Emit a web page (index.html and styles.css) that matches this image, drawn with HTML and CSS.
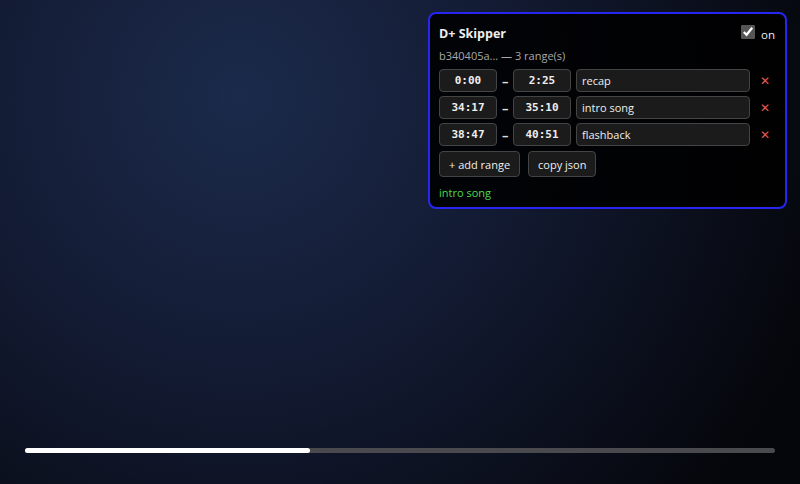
FILE: index.html
```html
<!DOCTYPE html>
<html lang="en">
  <head>
    <meta charset="UTF-8" />
    <meta name="viewport" content="width=device-width, initial-scale=1.0" />
    <title>D+ Skipper</title>
    <link rel="stylesheet" href="styles.css">
  </head>
  <body>
    <div class="player">
      <div class="skipper">
        <div class="skipper-head">
          <span class="skipper-title">D+ Skipper</span>
          <label class="toggle">
            <input type="checkbox" checked />
            <span>on</span>
          </label>
        </div>
        <div class="skipper-meta">b340405a... — 3 range(s)</div>
        <div class="range-list">
          <div class="range-row">
            <input class="time" type="text" value="0:00" />
            <span class="dash">–</span>
            <input class="time" type="text" value="2:25" />
            <input class="label" type="text" value="recap" />
            <button class="remove" type="button">✕</button>
          </div>
          <div class="range-row">
            <input class="time" type="text" value="34:17" />
            <span class="dash">–</span>
            <input class="time" type="text" value="35:10" />
            <input class="label" type="text" value="intro song" />
            <button class="remove" type="button">✕</button>
          </div>
          <div class="range-row">
            <input class="time" type="text" value="38:47" />
            <span class="dash">–</span>
            <input class="time" type="text" value="40:51" />
            <input class="label" type="text" value="flashback" />
            <button class="remove" type="button">✕</button>
          </div>
        </div>
        <div class="actions">
          <button class="action" type="button">+ add range</button>
          <button class="action" type="button">copy json</button>
        </div>
        <div class="status">intro song</div>
      </div>
      <div class="progress">
        <div class="progress-fill" style="width: 38%"></div>
      </div>
    </div>
  </body>
</html>
```

FILE: styles.css
```css
html,
body {
  margin: 0;
  height: 100%;
}
body {
  font-family: "Open Sans", "Noto Sans", sans-serif;
  background: radial-gradient(circle at 30% 20%, #1b2a4b 0%, #131b33 40%, #05060b 90%);
  color: #eee;
}
.player {
  position: relative;
  height: 100%;
  overflow: hidden;
}
.skipper {
  position: absolute;
  top: 12px;
  right: 13px;
  box-sizing: border-box;
  width: 359px;
  padding: 8px 10px 5px 9px;
  background: rgba(0, 0, 0, 0.88);
  border: 2px solid #2626f0;
  border-radius: 8px;
  font-size: 11px;
}
.skipper-head {
  display: flex;
  justify-content: space-between;
  align-items: center;
  height: 22px;
}
.skipper-title {
  font-weight: 700;
  font-size: 12.5px;
}
.toggle {
  display: flex;
  align-items: center;
  gap: 6px;
  font-size: 11.5px;
}
.toggle input {
  margin: 0 0 3px;
  width: 14px;
  height: 14px;
  accent-color: #555;
}
.toggle span {
  margin-top: 3px;
}
.skipper-meta {
  color: #a8a8a8;
  margin-top: 3px;
  margin-bottom: 4px;
  line-height: 18px;
}
.range-list {
  display: flex;
  flex-direction: column;
  gap: 4px;
}
.range-row {
  display: flex;
  align-items: center;
  gap: 5px;
}
.range-row input {
  box-sizing: border-box;
  height: 23px;
  margin: 0;
  background: #1b1b1b;
  border: 1px solid #444;
  border-radius: 4px;
  color: #eee;
  font-size: 11px;
}
.time {
  width: 58px;
  text-align: center;
  font-family: "DejaVu Sans Mono", monospace;
  font-weight: 700;
}
.label {
  flex: 1;
  min-width: 0;
  padding: 0 5px;
  font-family: "Open Sans", "Noto Sans", sans-serif;
}
.dash {
  width: 6px;
  text-align: center;
  color: #ddd;
  font-size: 13px;
  font-weight: 700;
}
.remove {
  width: 20px;
  padding: 0;
  background: none;
  border: none;
  color: #e05a5a;
  font-size: 12px;
  cursor: pointer;
}
.actions {
  display: flex;
  gap: 8px;
  margin-top: 5px;
}
.action {
  height: 26px;
  padding: 0 9px;
  background: #1b1b1b;
  border: 1px solid #444;
  border-radius: 4px;
  color: #eee;
  font-family: "Open Sans", "Noto Sans", sans-serif;
  font-size: 11px;
  cursor: pointer;
}
.status {
  margin-top: 7px;
  color: #4cdc4c;
  line-height: 18px;
}
.progress {
  position: absolute;
  left: 25px;
  right: 25px;
  bottom: 31px;
  height: 5px;
  background: #4a4a4e;
  border-radius: 3px;
}
.progress-fill {
  height: 100%;
  background: #fff;
  border-radius: 3px;
}
```
